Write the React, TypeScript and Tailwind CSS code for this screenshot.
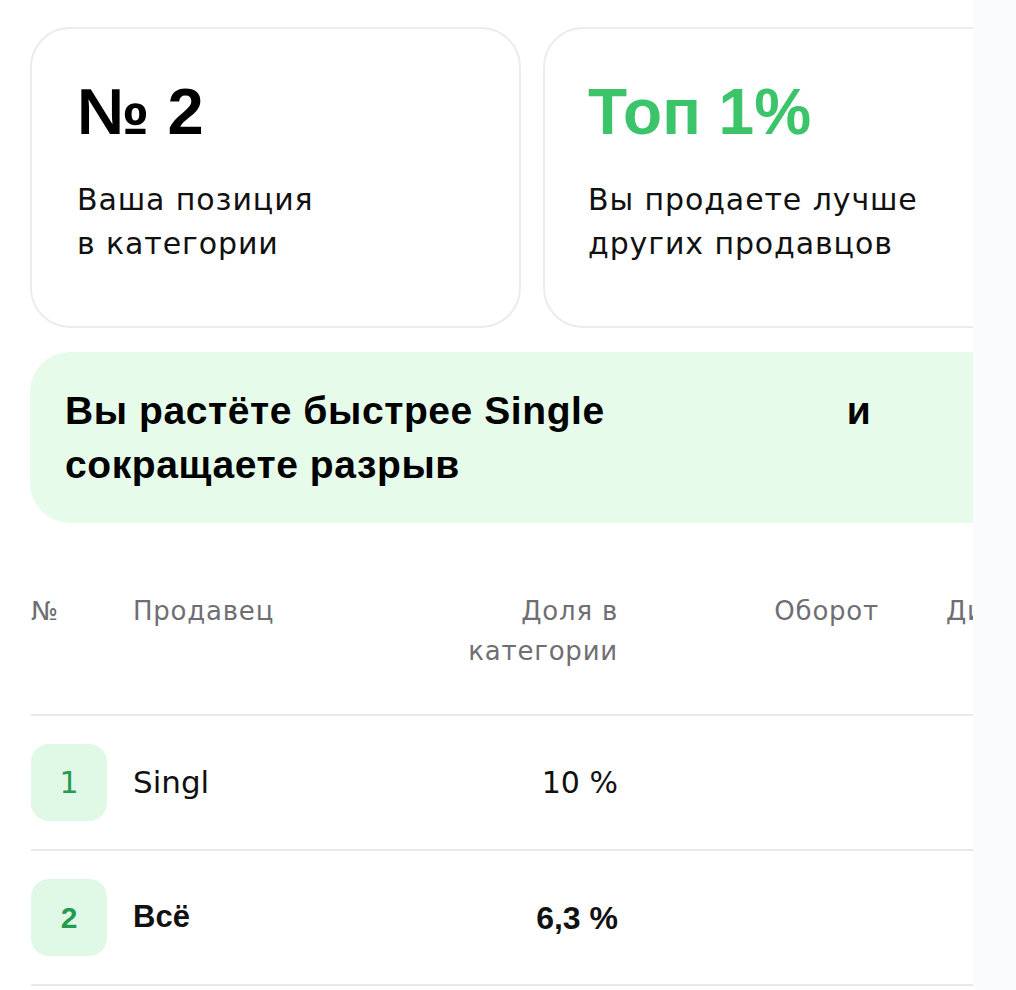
import React from 'react';

const regular = "font-['DejaVu_Sans',sans-serif]";
const bold = "font-['Liberation_Sans',Arial,sans-serif] font-bold";

type Row = { pos: string; name: string; share: string; strong?: boolean };

const rows: Row[] = [
  { pos: '1', name: 'Singl', share: '10 %' },
  { pos: '2', name: 'Всё', share: '6,3 %', strong: true },
];

const App: React.FC = () => {
  return (
    <div className="flex h-[990px] w-full bg-white text-[#111111]">
      <div className="w-[973px] shrink-0 overflow-hidden pt-[27px]">
        {/* карточки со статистикой */}
        <div className="flex gap-[22px] pl-[30px]">
          <div className="h-[301px] w-[491px] shrink-0 rounded-[40px] border-2 border-[#ececec] pl-[45px] pt-[51px]">
            <div className={`${bold} text-[65px] leading-[64px] text-black`}>№ 2</div>
            <div className={`${regular} mt-[34px] text-[30px] leading-[44px] tracking-[0.03em]`}>
              Ваша позиция
              <br />в категории
            </div>
          </div>
          <div className="h-[301px] w-[491px] shrink-0 rounded-[40px] border-2 border-[#ececec] pl-[43px] pt-[51px]">
            <div className={`${bold} text-[64px] leading-[64px] text-[#3cc46b]`}>Топ 1%</div>
            <div className={`${regular} mt-[34px] text-[30px] leading-[44px] tracking-[0.03em]`}>
              Вы продаете лучше
              <br />
              других продавцов
            </div>
          </div>
        </div>

        {/* плашка роста */}
        <div className="ml-[30px] mt-[24px] flex h-[171px] w-[1000px] items-center rounded-[40px] bg-[#e6fbea] pl-[35px]">
          <p className={`${bold} text-[39px] leading-[54px] tracking-[0.015em] text-black`}>
            Вы растёте быстрее Single<span className="inline-block w-[242px]" />и
            <br />
            сокращаете разрыв
          </p>
        </div>

        {/* таблица продавцов */}
        <div className="ml-[31px] mt-[68px] w-[942px]">
          <div
            className={`${regular} flex border-b-2 border-[#e9e9e9] pb-[43px] text-[26px] leading-[40px] tracking-[0.03em] text-[#6f6f73]`}
          >
            <div className="w-[102px] shrink-0">№</div>
            <div className="w-[270px] shrink-0">Продавец</div>
            <div className="w-[215px] shrink-0 text-right">
              Доля в<br />
              категории
            </div>
            <div className="w-[261px] shrink-0 text-right">Оборот</div>
            <div className="shrink-0 pl-[67px]">Динамика</div>
          </div>

          {rows.map((r) => (
            <div key={r.pos} className="flex h-[135px] items-center border-b-2 border-[#e9e9e9]">
              <div className="w-[102px] shrink-0">
                <div
                  className={`flex h-[77px] w-[76px] items-center justify-center rounded-[18px] bg-[#e0f9e6] text-[30px] text-[#279a52] ${
                    r.strong ? bold : regular
                  }`}
                >
                  {r.pos}
                </div>
              </div>
              <div className={`w-[270px] shrink-0 text-[31px] ${r.strong ? bold : regular}`}>{r.name}</div>
              <div
                className={`w-[215px] shrink-0 text-right ${r.strong ? `${bold} text-[32px]` : `${regular} text-[30px]`}`}
              >
                {r.share}
              </div>
            </div>
          ))}
        </div>
      </div>
      <div className="flex-1 bg-[#fafbfd]" />
    </div>
  );
};

export default App;
